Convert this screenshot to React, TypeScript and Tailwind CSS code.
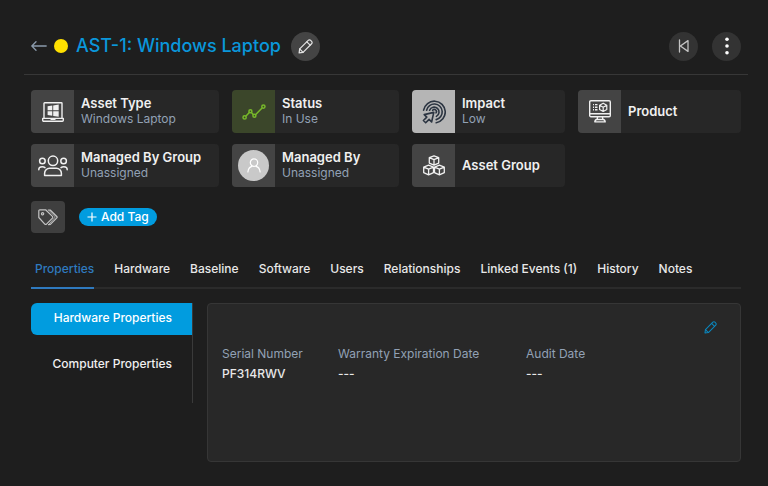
import { useState } from "react";
import type { ReactNode } from "react";
import clsx from "clsx";

const TABS = ["Properties", "Hardware", "Baseline", "Software", "Users", "Relationships", "Linked Events (1)", "History", "Notes"];
const SECTIONS = ["Hardware Properties", "Computer Properties"];

function ArrowLeftIcon() {
  return (
    <svg width="16" height="10" viewBox="0 0 16 10" fill="none" stroke="#8b9bac" strokeWidth="1.3" strokeLinecap="round" strokeLinejoin="round">
      <path d="M15.2 5H.8M5 .8.8 5 5 9.2" />
    </svg>
  );
}

function PencilIcon({ size }: { size: number }) {
  return (
    <svg width={size} height={size} viewBox="0 0 16 16" fill="none" stroke="currentColor" strokeWidth="1.3" strokeLinejoin="round" strokeLinecap="round">
      <path d="M1.2 14.8 1.8 10.6 10.9 1.5a1.8 1.8 0 0 1 2.6 0l1 1a1.8 1.8 0 0 1 0 2.6L5.4 14.2Z" />
      <path d="M1.8 10.6 5.4 14.2M9.4 3l3.6 3.6" />
    </svg>
  );
}

function SkipBackIcon() {
  return (
    <svg width="12" height="14" viewBox="0 0 12 14" fill="none" stroke="#c4c4c4" strokeWidth="1.3" strokeLinecap="round" strokeLinejoin="round">
      <path d="M1.5 1v12M10 1.6v10.8L2.4 7Z" />
    </svg>
  );
}

function DotsIcon() {
  return (
    <svg width="4" height="18" viewBox="0 0 4 18" fill="#fff">
      <circle cx="2" cy="2.2" r="1.8" />
      <circle cx="2" cy="9" r="1.8" />
      <circle cx="2" cy="15.8" r="1.8" />
    </svg>
  );
}

function LaptopIcon() {
  return (
    <svg width="22" height="20" viewBox="0 0 22 20" fill="none" stroke="#f0f0f0" strokeWidth="1.4" strokeLinejoin="round">
      <path d="M2 16.2V1.3a.6.6 0 0 1 .6-.6h16.8a.6.6 0 0 1 .6.6v14.9" />
      <path d="M.7 16.4h20.6v1.8a1 1 0 0 1-1 1H1.7a1 1 0 0 1-1-1ZM8.5 17.4h5" />
      <path d="m5.6 4.3 4.7-.7v4.6H5.6ZM11.2 3.4l5.5-.8v5.6h-5.5ZM5.6 9.2h4.7v4.6l-4.7-.7ZM11.2 9.2h5.5v5.6l-5.5-.8Z" fill="#f0f0f0" stroke="none" />
    </svg>
  );
}

function TrendIcon() {
  return (
    <svg width="24" height="16" viewBox="0 0 24 16" fill="none" stroke="#77b82a" strokeWidth="1.5">
      <circle cx="2.6" cy="13.4" r="1.6" />
      <circle cx="8.4" cy="7.3" r="1.5" />
      <circle cx="12.4" cy="11.8" r="1.5" />
      <circle cx="21.4" cy="2.6" r="1.6" />
      <path d="m3.8 12.2 3.5-3.7M9.4 8.5l2 2.2M13.5 10.7l6.8-6.9" />
    </svg>
  );
}

function TargetIcon() {
  return (
    <svg width="24" height="24" viewBox="0 0 24 24" fill="none" stroke="#2c3542" strokeWidth="1.6" strokeLinejoin="round" strokeLinecap="round">
      <path d="M1.6 10.2A10.9 10.9 0 1 1 14.2 22.8" />
      <path d="M4.6 10.2A7.9 7.9 0 1 1 14.2 19.6" />
      <path d="M7.6 10.2A4.9 4.9 0 1 1 14.4 16.4" />
      <path d="M10.6 10.4A2 2 0 1 1 14 12.9" />
      <path d="m11.8 12.4-2.2 9.6-2.5-2.6-3.4 3.4-2.3-2.3 3.4-3.4-2.6-2.5Z" />
    </svg>
  );
}

function MonitorIcon() {
  return (
    <svg width="22" height="23" viewBox="0 0 22 23" fill="none" stroke="#f0f0f0" strokeWidth="1.4" strokeLinejoin="round">
      <rect x=".7" y=".7" width="20.6" height="16" rx="1.2" />
      <path d="M.7 13.8h20.6M8.6 16.8 8 19.5h6l-.6-2.7M8 19.5c-1.4 0-2 .7-2.2 2.4h10.4c-.2-1.7-.8-2.4-2.2-2.4" />
      <path d="M4 4.6h1M6 4.6h2.5M4 7.2h1M6 7.2h2.5M4 9.8h1M6 9.8h2.5" />
      <path d="m14.2 3.2 3.6 2v4.2l-3.6 2.1-3.6-2.1V5.2ZM10.6 5.2l3.6 2.1 3.6-2.1M14.2 7.3v4.2" strokeWidth="1.2" />
    </svg>
  );
}

function GroupIcon() {
  return (
    <svg width="30" height="22" viewBox="0 0 30 22" fill="none" stroke="#f0f0f0" strokeWidth="1.5" strokeLinejoin="round" strokeLinecap="round">
      <circle cx="15" cy="5.8" r="4.7" />
      <path d="M6.6 20.6v-2.4a5 5 0 0 1 5-5h6.8a5 5 0 0 1 5 5v2.4Z" />
      <circle cx="4.4" cy="6" r="2.8" />
      <circle cx="25.6" cy="6" r="2.8" />
      <path d="M.8 14.8c0-2 1.4-3 3.4-3 1.2 0 2 .2 2.8.8M29.2 14.8c0-2-1.4-3-3.4-3-1.2 0-2 .2-2.8.8" />
    </svg>
  );
}

function AvatarIcon() {
  return (
    <span className="flex size-[31px] items-center justify-center rounded-full bg-[#c9c9c9]">
      <svg width="14" height="15" viewBox="0 0 14 15" fill="none" stroke="#fff" strokeWidth="1.2" strokeLinecap="round">
        <circle cx="7" cy="4.6" r="3.7" />
        <path d="M.9 14c.3-3.2 2-5 4-5.6M13.1 14c-.3-3.2-2-5-4-5.6" />
      </svg>
    </span>
  );
}

function CubesIcon() {
  return (
    <svg width="22" height="21" viewBox="0 0 22 21" fill="none" stroke="#f0f0f0" strokeWidth="1.3" strokeLinejoin="round">
      <path d="m11 .8 4.7 1.9v5.4L11 10.2 6.3 8.1V2.7ZM6.3 2.7 11 4.6l4.7-1.9M11 4.6v5.6" />
      <path d="m5.6 10.2 4.9 1.9v5.6l-4.9 2.1-4.9-2.1v-5.6ZM.7 12.1l4.9 2 4.9-2M5.6 14.1v5.7" />
      <path d="m16.4 10.2 4.9 1.9v5.6l-4.9 2.1-4.9-2.1v-5.6ZM11.5 12.1l4.9 2 4.9-2M16.4 14.1v5.7" />
    </svg>
  );
}

function TagsIcon() {
  return (
    <svg width="20" height="17" viewBox="0 0 20 17" fill="none" stroke="#c4c4c4" strokeWidth="1.2" strokeLinejoin="round" strokeLinecap="round">
      <path d="M.8 1.8a1 1 0 0 1 1-1h5.8l6.8 6.6a1.2 1.2 0 0 1 0 1.7l-5.9 6a1.2 1.2 0 0 1-1.7 0L.8 8.5Z" />
      <circle cx="4.6" cy="4.7" r="1.1" />
      <path d="M10.6 1h1.6l6.6 6.5a1 1 0 0 1 0 1.4L12.4 15.4l-1.8.2" />
      <path d="m10.6 1 6.1 6.3a1 1 0 0 1 0 1.4l-6.1 6.9" strokeWidth=".8" />
    </svg>
  );
}

const CARDS: { label: string; value?: string; icon: ReactNode; tile: string }[] = [
  { label: "Asset Type", value: "Windows Laptop", icon: <LaptopIcon />, tile: "bg-[#444444]" },
  { label: "Status", value: "In Use", icon: <TrendIcon />, tile: "bg-[#3b462a]" },
  { label: "Impact", value: "Low", icon: <TargetIcon />, tile: "bg-[#b5b5b5]" },
  { label: "Product", icon: <MonitorIcon />, tile: "bg-[#444444]" },
  { label: "Managed By Group", value: "Unassigned", icon: <GroupIcon />, tile: "bg-[#444444]" },
  { label: "Managed By", value: "Unassigned", icon: <AvatarIcon />, tile: "bg-[#444444]" },
  { label: "Asset Group", icon: <CubesIcon />, tile: "bg-[#444444]" },
];

function Field({ label, value }: { label: string; value: string }) {
  return (
    <div>
      <dt className="text-xs leading-5 text-[#92a1b5]">{label}</dt>
      <dd className="text-xs leading-5 font-medium text-[#e8e8e8]">{value}</dd>
    </div>
  );
}

export default function App() {
  const [tab, setTab] = useState("Properties");
  const [section, setSection] = useState("Hardware Properties");

  return (
    <div className="min-h-screen bg-[#1e1e1e] pt-[18px] pr-5 pb-6 pl-6 font-['Inter',sans-serif] text-white">
      <header className="flex h-[57px] items-center border-b border-[#373737] px-[7px]">
        <button aria-label="Back" className="mr-[7px]">
          <ArrowLeftIcon />
        </button>
        <span className="mr-2 size-3.5 rounded-full bg-[#ffe000]" />
        <h1 className="mr-2.5 text-lg font-medium text-[#0a97db]">AST-1: Windows Laptop</h1>
        <button aria-label="Edit name" className="flex size-[29px] items-center justify-center rounded-full bg-[#444444] text-[#e4e4e4]">
          <PencilIcon size={15} />
        </button>
        <div className="ml-auto flex gap-3.5">
          <button aria-label="Previous" className="flex size-[29px] items-center justify-center rounded-full bg-[#333333]">
            <SkipBackIcon />
          </button>
          <button aria-label="More actions" className="flex size-[29px] items-center justify-center rounded-full bg-[#333333]">
            <DotsIcon />
          </button>
        </div>
      </header>

      <main className="px-[7px] pt-[15px]">
        <div className="grid grid-cols-[188fr_167fr_153fr_163fr] gap-x-[13px] gap-y-[11px]">
          {CARDS.map((c) => (
            <div key={c.label} className="flex h-[43px] overflow-hidden rounded bg-[#272727]">
              <div className={clsx("flex w-[43px] shrink-0 items-center justify-center", c.tile)}>{c.icon}</div>
              <div className="flex flex-col justify-center pb-0.5 pl-[7px] whitespace-nowrap">
                <div className="text-[13px] leading-4 font-semibold text-[#f0f0f0]">{c.label}</div>
                {c.value && <div className="text-xs leading-4 text-[#92a1b5]">{c.value}</div>}
              </div>
            </div>
          ))}
        </div>

        <div className="mt-3.5 flex items-center gap-3.5">
          <div className="flex h-8 w-[34px] items-center justify-center rounded bg-[#3f3f3f]">
            <TagsIcon />
          </div>
          <button className="flex h-[18px] items-center gap-1 rounded-full bg-[#019cdf] px-2 text-xs font-medium">
            <svg width="10" height="10" viewBox="0 0 10 10" stroke="#fff" strokeWidth="1.2">
              <path d="M5 .5v9M.5 5h9" />
            </svg>
            Add Tag
          </button>
        </div>

        <nav className="mt-[18px] flex gap-4 border-b-2 border-[#2b2b2b] whitespace-nowrap">
          {TABS.map((t) => (
            <button
              key={t}
              onClick={() => setTab(t)}
              className={clsx(
                "-mb-0.5 h-[38px] border-b-2 pl-1 text-xs font-medium",
                t === tab ? "border-[#2f7abf] text-[#2f7abf]" : "border-transparent text-[#e8e8e8]"
              )}
            >
              {t}
            </button>
          ))}
        </nav>

        <div className="mt-3.5 flex items-start gap-3.5">
          <div className="flex h-[100px] w-[162px] shrink-0 flex-col gap-3.5 border-r border-[#3a3a3a]">
            {SECTIONS.map((s) => (
              <button
                key={s}
                onClick={() => setSection(s)}
                className={clsx(
                  "h-8 rounded-l-md pr-5 pb-0.5 text-right text-xs font-medium",
                  s === section ? "bg-[#019cdf] text-white" : "text-[#f0f0f0]"
                )}
              >
                {s}
              </button>
            ))}
          </div>
          <section className="min-h-[159px] flex-1 rounded border border-[#363636] bg-[#282828] px-3.5 pt-[17px]">
            <div className="flex justify-end pr-[9px]">
              <button aria-label="Edit properties" className="text-[#0b86bd]">
                <PencilIcon size={13} />
              </button>
            </div>
            <dl className="mt-2.5 grid grid-cols-[116px_188px_1fr]">
              <Field label="Serial Number" value="PF314RWV" />
              <Field label="Warranty Expiration Date" value="---" />
              <Field label="Audit Date" value="---" />
            </dl>
          </section>
        </div>
      </main>
    </div>
  );
}
